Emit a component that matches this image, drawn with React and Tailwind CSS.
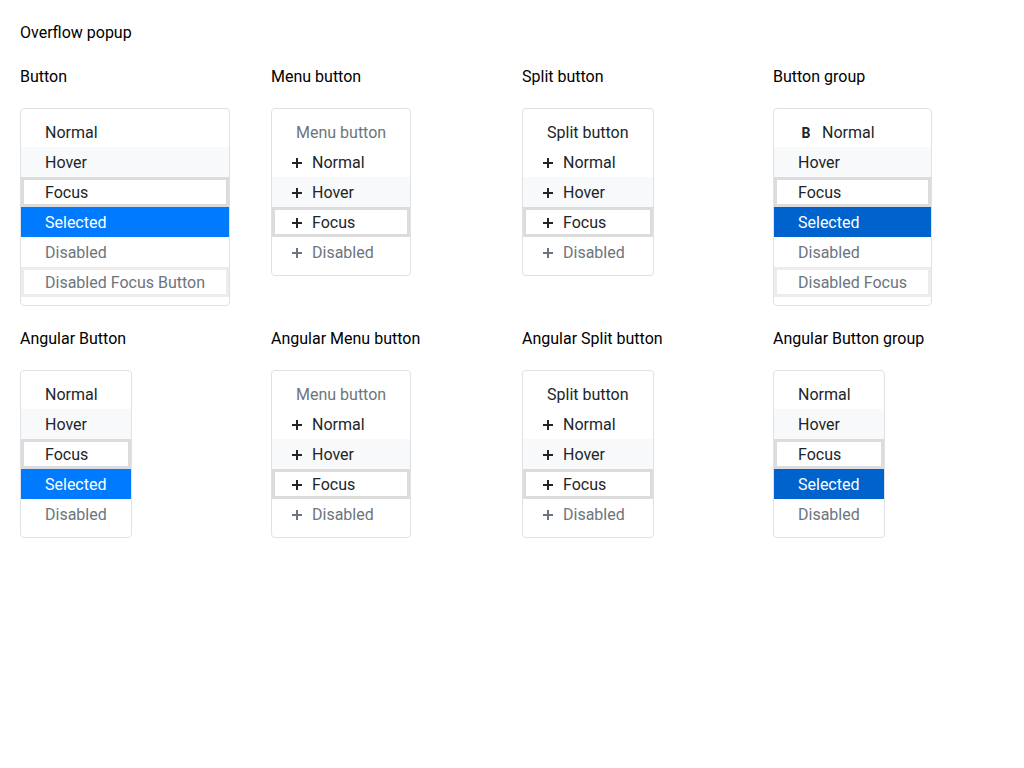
const FONT = { fontFamily: "Roboto, 'Liberation Sans', sans-serif" };

function Plus({ muted }) {
    return (
        <svg width="14" height="14" viewBox="0 0 14 14" className="shrink-0">
            <path
                d="M2 7h10M7 2v10"
                stroke={muted ? "#6c757d" : "#212529"}
                strokeWidth="2"
            />
        </svg>
    );
}

// one row inside a popup
function Item({ label, state, icon, group }) {
    let cls = "h-[30px] pt-[2px] flex items-center whitespace-nowrap leading-6 ";
    if (state === "hover") cls += "bg-[#f8f9fa] text-[#212529]";
    else if (state === "focus") cls += "shadow-[inset_0_0_0_3px_#dcdcdc] text-[#212529]";
    else if (state === "selected")
        cls += (group ? "bg-[#0062cc]" : "bg-[#007bff]") + " text-white";
    else if (state === "disabled") cls += "text-[#6c757d]";
    else if (state === "disabledFocus")
        cls += "shadow-[inset_0_0_0_3px_#ececec] text-[#6c757d]";
    else if (state === "header") cls += "text-[#6c757d]";
    else cls += "text-[#212529]";

    if (icon === "plus") {
        return (
            <div className={cls + " pl-[18px] pr-6 gap-2"}>
                <Plus muted={state === "disabled"} />
                <span>{label}</span>
            </div>
        );
    }
    if (icon === "bold") {
        return (
            <div className={cls + " px-6 gap-2"}>
                <span className="w-4 text-center text-sm font-bold">B</span>
                <span>{label}</span>
            </div>
        );
    }
    return <div className={cls + " px-6"}>{label}</div>;
}

function Popup({ title, items, group }) {
    return (
        <div>
            <div className="mt-5 h-6 leading-[26px] text-black">{title}</div>
            <div className="mt-5 w-fit border border-[#dee2e6] rounded py-2 bg-white">
                {items.map((it, i) => (
                    <Item key={i} {...it} group={group} />
                ))}
            </div>
        </div>
    );
}

const buttonItems = [
    { label: "Normal" },
    { label: "Hover", state: "hover" },
    { label: "Focus", state: "focus" },
    { label: "Selected", state: "selected" },
    { label: "Disabled", state: "disabled" },
];

const menuItems = (head, muted) => [
    { label: head, state: muted ? "header" : undefined },
    { label: "Normal", icon: "plus" },
    { label: "Hover", state: "hover", icon: "plus" },
    { label: "Focus", state: "focus", icon: "plus" },
    { label: "Disabled", state: "disabled", icon: "plus" },
];

export default function App() {
    return (
        <div className="min-h-screen bg-white p-5 text-base" style={FONT}>
            <div className="h-6 leading-[26px] text-black">Overflow popup</div>

            <div className="grid grid-cols-[251px_251px_251px_251px] pb-5">
                <Popup
                    title="Button"
                    items={[
                        ...buttonItems,
                        { label: "Disabled Focus Button", state: "disabledFocus" },
                    ]}
                />
                <Popup title="Menu button" items={menuItems("Menu button", true)} />
                <Popup title="Split button" items={menuItems("Split button", false)} />
                <Popup
                    title="Button group"
                    group
                    items={[
                        { label: "Normal", icon: "bold" },
                        ...buttonItems.slice(1),
                        { label: "Disabled Focus", state: "disabledFocus" },
                    ]}
                />

                <Popup title="Angular Button" items={buttonItems} />
                <Popup title="Angular Menu button" items={menuItems("Menu button", true)} />
                <Popup title="Angular Split button" items={menuItems("Split button", false)} />
                <Popup title="Angular Button group" group items={buttonItems} />
            </div>
        </div>
    );
}
